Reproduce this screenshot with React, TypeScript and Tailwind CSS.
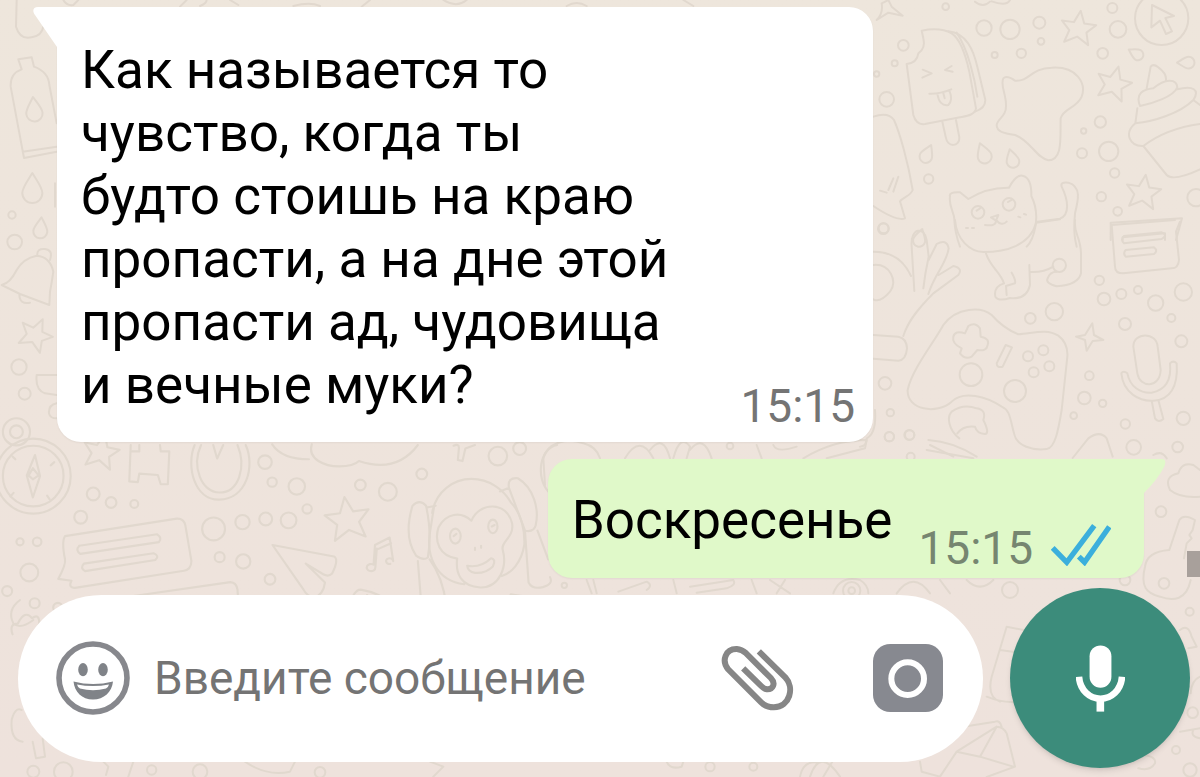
import { useState } from "react";

type Dot = [x: number, y: number, r: number];
type Mark = [x: number, y: number, size: number, angle: number];

interface TileProps {
  x: number;
  y: number;
  scale: number;
  dots?: Dot[];
  stars?: Mark[];
  drops?: Mark[];
  paths: string[];
}

const STAR = "M0 -10 L3 -3 L10 -3 L5 2 L7 9 L0 5 L-7 9 L-5 2 L-10 -3 L-3 -3 Z";
const DROP = "M0 -10 C3 -5 7 0 7 4 A7 7 0 0 1 -7 4 C-7 0 -3 -5 0 -10 Z";

const tiles: TileProps[] = [
  // ice cream, cloud, cake
  {
    x: 860, y: 0, scale: 1 / 3,
    dots: [
      [257, 20, 10], [130, 136, 16], [104, 190, 9], [80, 298, 22], [50, 222, 8], [372, 84, 23], [450, 88, 29],
      [538, 68, 18], [543, 124, 10], [404, 165, 9], [484, 160, 14], [757, 24, 15], [774, 88, 25], [728, 160, 16],
      [905, 55, 80], [721, 366, 17], [671, 393, 8], [666, 460, 15], [746, 454, 29], [764, 519, 14], [724, 590, 14],
      [773, 634, 13], [206, 537, 14], [1008, 593, 26], [70, 686, 16],
    ],
    stars: [[655, 84, 5.2, 8], [762, 250, 5.2, 15], [850, 576, 5.2, 8]],
    drops: [
      [202, 460, 2.7, 25], [370, 458, 3, -20], [456, 474, 2.7, -15], [826, 160, 2.3, -60], [976, 188, 2.5, -90], [180, 712, 2.6, 15],
    ],
    paths: [
      "M185 92 C220 85 250 86 275 100 C300 116 318 170 328 215 L348 325 C345 345 320 348 300 352 L195 372 C175 375 165 362 160 345 L140 192 C160 190 172 182 175 160 C190 150 195 135 190 115 Z",
      "M265 94 C320 100 340 150 352 200 L376 300 Q376 325 345 335",
      "M290 98 C325 150 345 240 352 290",
      "M247 365 L257 410 C262 445 300 440 298 412 L288 360",
      "M188 209 L215 220 L187 233 M275 198 L255 210 L278 215 M208 281 Q240 282 274 268 M232 280 Q238 320 265 315 Q280 300 268 272 M250 280 L254 295",
      "M430 235 Q440 225 465 242 C510 245 510 205 575 203 C650 198 680 250 665 290 C650 325 610 325 602 355 C600 410 610 480 565 481 C530 475 510 420 465 405 C430 400 410 395 410 375 C412 355 440 350 438 315 C438 280 420 255 430 235 Z",
      "M876 15 L942 48 L916 54 L936 94 L918 102 L900 62 L874 82 Z",
      "M860 265 L872 200 Q880 190 895 202 Q920 220 918 240 M840 318 C825 280 850 268 880 265 C915 235 950 235 952 262 C940 290 880 310 840 318 M952 268 C1000 255 1020 270 1000 300 C960 340 880 365 826 370 L832 325 M826 370 C790 400 810 440 850 438 C900 400 960 380 1020 372 M1000 300 L1020 315 M850 438 L920 525 Q940 545 1020 508",
      "M40 350 Q85 335 102 360 C120 400 145 490 158 570 C150 590 130 590 120 604 L135 655 Q110 665 40 618 M100 535 L85 570 M115 530 L100 575 M60 572 L80 578",
      "M270 590 Q265 575 300 577 L325 597 C360 575 400 562 447 563 Q470 520 490 528 Q515 535 514 588 C545 650 520 720 500 740 M270 590 C265 620 285 640 283 660 Q285 700 300 740",
      "M532 665 L600 656 C630 645 625 600 605 560 Q600 545 625 548 C665 560 655 600 645 640 C640 700 645 720 650 740",
      "M335 637 a19 19 0 1 0 38 0 a19 19 0 1 0 -38 0 M350 632 l12 -8 M428 613 a19 19 0 1 0 38 0 a19 19 0 1 0 -38 0 M444 606 l14 -8 M393 652 L415 645 L408 662 Z M408 660 Q410 680 375 675 M408 660 Q425 680 440 665 M318 684 h6 M336 684 h6 M475 650 l6 2 M492 642 l6 2",
      "M752 720 L752 668 L966 655 L948 720 M788 720 L788 712 L915 700 L915 720",
      "M50 60 Q70 40 65 10 L85 0 M85 0 L95 20 L128 47 L85 38 L50 60 M345 5 Q370 25 390 5 M395 4 Q440 20 450 0",
    ],
  },
  // cat body, gamepad, microphone
  {
    x: 860, y: 220, scale: 1 / 3,
    dots: [
      [71, 25, 15], [511, 295, 16], [583, 275, 26], [75, 490, 19], [91, 578, 11], [88, 650, 14], [149, 645, 14],
      [333, 464, 34], [465, 513, 33], [504, 409, 15], [550, 391, 15], [568, 439, 15], [521, 457, 15], [718, 181, 14],
      [732, 237, 19], [784, 222, 15], [834, 210, 12], [887, 249, 23], [970, 216, 26], [934, 294, 12], [795, 312, 18],
      [964, 364, 18], [688, 467, 13], [673, 534, 19], [728, 550, 11], [641, 587, 10], [796, 612, 14], [970, 595, 20],
      [821, 682, 22], [953, 681, 16], [598, 136, 20],
    ],
    paths: [
      "M285 0 C290 60 330 95 370 96 C440 96 510 75 528 10 M528 8 L600 -2 M645 0 C640 40 662 50 663 100 L663 160 Q655 195 590 199 Q555 190 563 175 Q570 155 590 155 M378 100 C390 140 420 155 432 190 Q400 200 406 230 Q415 245 450 234 Q500 240 510 195 L508 135 M455 158 Q468 180 465 190 L438 198 L440 225 M510 156 Q550 158 580 140",
      "M755 15 L945 0 M755 15 L765 140 Q765 160 790 160 L935 145 Q955 145 957 120 L948 35 L960 5 M792 48 L905 37 Q925 45 905 57 L792 70 Q780 58 792 48 M797 90 L882 82 Q895 92 882 102 L797 110 Q788 100 797 90",
      "M163 213 L155 80 C150 20 195 20 200 60 L206 110 Q195 160 190 205 M206 120 L230 72 Q260 55 266 85 C260 130 225 160 205 222 M236 165 L280 138 Q310 145 295 165 L220 220 C180 260 145 300 130 348 M40 95 Q120 95 153 168 M40 135 C90 130 115 185 90 215 Q60 250 40 238 M40 345 L115 350 Q140 355 141 385 Q138 420 115 422 L40 416",
      "M250 315 C290 260 365 260 395 285 Q430 325 475 343 C520 340 560 325 595 347 Q625 370 622 410 L605 570 C595 630 585 685 560 687 C520 692 470 680 462 640 C450 595 450 570 425 560 C380 530 310 510 275 545 C230 585 140 570 143 510 C155 450 220 370 250 315 Z",
      "M325 318 Q345 305 360 325 L362 350 Q390 355 383 375 Q380 395 352 390 L335 410 Q315 420 300 400 L305 385 Q275 370 280 350 Q285 330 315 340 Z M437 375 L456 382 L428 440 Q410 445 410 430 Z",
      "M697 310 L702 345 L730 360 L698 363 L680 392 L675 360 L648 350 L675 345 Z",
      "M820 380 C820 335 890 335 893 380 L902 450 C900 505 840 505 832 460 Z M784 460 Q790 450 802 460 C810 500 840 520 875 518 C915 510 935 480 930 430 Q940 420 950 430 C955 500 930 540 880 542 C840 545 790 520 784 460 M875 542 L885 595 Q895 610 910 597 L895 540",
      "M298 655 C265 630 260 590 275 575 Q310 550 350 565 Q380 570 370 600 Q390 640 375 642 Q350 640 345 620 Q310 615 292 640 M638 714 L685 655 Q720 630 740 655 L758 710 M880 705 Q905 690 920 715 M205 660 Q280 665 350 710 M210 675 L280 710 M0 680 Q20 680 20 655 Q50 640 45 570",
    ],
  },
  // compass, chat note, plane, monkey
  {
    x: 0, y: 420, scale: 1 / 2.8,
    dots: [
      [46, 33, 38], [46, 33, 18], [93, 157, 105], [93, 157, 85], [261, 207, 18], [311, 231, 15], [376, 235, 11],
      [226, 272, 18], [56, 341, 10], [104, 341, 12], [82, 427, 25], [20, 479, 14], [97, 513, 14], [162, 525, 13],
      [598, 305, 32], [679, 286, 20], [744, 277, 18], [808, 281, 22], [860, 249, 13], [762, 174, 13], [742, 118, 19],
      [831, 186, 23], [615, 384, 14], [681, 396, 20], [756, 446, 15], [1009, 182, 15], [1086, 201, 25], [1181, 151, 15],
      [1394, 101, 26], [1455, 80, 18], [799, 512, 12],
    ],
    stars: [[283, 88, 5, 12], [973, 277, 6.2, -8]],
    paths: [
      "M98 98 L112 157 L92 217 L75 155 Z M80 155 L92 135 L108 155 L92 166 Z M152 118 l-10 9 M38 204 l-9 10 M132 212 l7 10 M43 110 l-8 -8",
      "M366 70 L362 172 L386 174 L390 150 L442 154 L450 180 L470 180 L474 88 L450 88 L448 70 M366 88 L390 88 L390 70",
      "M545 70 C520 130 545 225 614 223 C690 222 715 130 688 70 M563 70 C535 130 565 203 614 203 C670 203 690 130 665 70 M597 70 L608 108 L625 70",
      "M182 325 L495 276 Q515 275 519 295 L536 395 Q535 420 515 422 L210 470 Q190 470 200 450 L163 445 Q185 405 182 390 Q172 340 182 325 Z M222 352 L440 320 Q455 330 445 342 L225 375 Q210 365 222 352 M235 402 L430 373 Q448 380 435 392 L238 423 Q223 415 235 402",
      "M325 520 Q325 500 345 497 L645 454 Q662 455 665 475 L668 520 M365 520 L610 500 Q625 505 622 520",
      "M763 350 L935 382 Q950 390 930 430 Q920 440 905 432 L856 402 L910 455 Q905 490 880 497 Q860 495 850 475 Z",
      "M1046 405 L1050 350 L1091 329 L1101 395 M1050 365 L1095 345 M1046 405 a12 10 0 1 0 5 8 L1055 360 M1101 395 a10 8 0 1 0 -8 8",
      "M762 68 Q790 110 865 110 M873 68 C860 110 910 130 950 130 Q990 130 1005 115 Q1110 150 1170 70 M1270 72 Q1285 65 1285 78 L1282 112 L1295 115 L1303 80 L1330 70",
      "M1210 260 C1220 200 1270 165 1320 165 C1370 165 1410 195 1430 230 C1460 260 1470 310 1468 350 C1460 400 1430 430 1405 437 M1300 460 C1220 450 1195 380 1203 320 L1215 245 M1280 388 C1230 380 1215 340 1228 300 C1250 260 1290 255 1320 282 C1340 230 1420 225 1434 290 C1440 330 1400 340 1408 365 C1420 410 1400 470 1345 469 C1290 465 1275 430 1280 388",
      "M1308 408 Q1345 415 1375 387 Q1390 390 1380 410 Q1360 430 1330 428 Q1310 425 1308 408 M1330 358 v6 M1347 352 v6 M1260 325 a15 21 0 1 0 30 0 a15 21 0 1 0 -30 0 M1270 325 l8 -6 M1367 298 a13 19 0 1 0 26 0 a13 19 0 1 0 -26 0 M1377 298 l8 -4",
      "M1193 240 Q1175 220 1155 240 C1140 290 1138 340 1165 380 Q1185 395 1198 385 Q1210 320 1193 240 M1195 245 L1220 240 M1170 395 L1180 520 M1203 390 Q1240 440 1250 520",
      "M1425 190 Q1420 160 1450 163 C1495 190 1510 250 1500 295 Q1495 315 1470 310 Z M1425 190 L1400 200 M1470 312 L1480 455 Q1490 475 1520 468 Q1550 460 1540 440 M1505 310 L1535 390",
      "M980 520 Q990 475 1010 475 Q1070 485 1100 520 M1010 495 l5 25 M1028 490 l12 30 M1050 495 l15 25 M1420 520 L1430 488 L1475 495 L1470 520",
      "M1535 200 C1500 160 1510 80 1560 70 M50 570 Q70 530 90 555 Q110 540 110 570 L95 600 M35 600 Q25 570 50 570",
    ],
  },
  // bottle and top edge
  {
    x: 0, y: 0, scale: 1 / 3,
    dots: [[36, 645, 11], [44, 726, 22], [57, 1101, 23], [74, 1181, 18]],
    drops: [[102, 326, 3.5, -5], [97, 562, 4.3, 0], [122, 682, 3, 5]],
    stars: [[107, 1003, 5, 25]],
    paths: [
      "M50 0 L48 80 Q60 120 95 112 Q125 108 130 80 M55 178 L95 172 L102 200 Q145 215 148 255 L170 370 M55 178 L65 208 Q30 220 32 260 L72 474 L170 455 M68 455 L170 440",
      "M5 855 Q30 850 50 810 Q70 775 110 767 Q150 770 160 815 Q155 850 150 875 L148 915 L60 882 Z M112 765 Q110 745 135 747 Q160 750 150 780 M58 885 Q60 915 90 908",
      "M170 1125 L110 1125 Q105 1170 135 1180 L170 1185 M170 1210 Q145 1215 147 1240 Q150 1255 170 1255 M165 550 V620",
      "M190 0 Q200 18 220 15 L235 0 M540 20 L560 0 M600 18 Q620 10 620 0 M690 0 L715 15 M880 18 Q930 5 960 18 M1085 20 L1110 0 M1330 0 Q1370 25 1400 0 M1700 18 Q1730 0 1760 18 M2050 0 L2080 18",
    ],
  },
  // key and heart on the right
  {
    x: 1120, y: 420, scale: 1 / 3,
    dots: [[123, 275, 16], [132, 490, 16], [209, 575, 12], [218, 878, 16], [168, 990, 12], [210, 1050, 20], [15, 480, 16]],
    paths: [
      "M150 210 Q130 170 175 160 Q185 125 220 135 L240 150 M150 210 Q180 235 240 230",
      "M148 390 L178 300 Q190 280 225 300 L218 330 L208 345 L215 355 L200 370 L192 415 M148 390 Q80 395 75 440 C60 500 80 520 120 530 C160 545 200 540 212 480",
      "M180 630 Q205 610 215 650 L230 680 L205 685 M212 820 Q215 780 240 770 M180 935 L240 925 M220 930 Q210 950 240 955 M70 1005 Q110 1010 105 1030 Q90 1055 55 1045",
    ],
  },
  // strip below the composer
  {
    x: 0, y: 580, scale: 1 / 3,
    dots: [[100, 575, 18], [455, 570, 14], [600, 575, 22], [190, 575, 28], [960, 577, 16], [2130, 560, 14], [2260, 560, 12]],
    paths: [
      "M68 485 Q30 480 35 420 Q45 380 65 390 M98 485 L108 535 L135 530 L128 475 M60 60 Q20 90 40 130 Q60 150 100 120",
      "M310 545 L325 560 L318 585 M400 545 L385 590 M735 545 Q800 590 870 575 L885 545 M1290 545 L1330 560 L1300 590",
      "M2000 545 Q2010 570 2045 560 L2050 545 M2400 590 Q2410 540 2455 548 M2430 590 Q2460 500 2520 590",
      "M2470 590 L2500 540 M2760 545 L2765 575 L2820 590 M2820 590 L2870 515 L2990 440 Q3010 440 3020 460 L3045 560 L2960 591 M2890 440 L2985 425 Q3000 420 3005 440 M2870 515 L2940 530 L2990 440 M2940 530 L3040 560",
      "M2960 350 Q3010 370 3050 365 M3020 140 L2975 290 Q2960 350 3000 365 M3020 140 L3120 160 M3000 210 L3070 220",
    ],
  },
  // gap around the outgoing message
  {
    x: 540, y: 430, scale: 1 / 3,
    dots: [[570, 48, 10], [1048, 20, 14], [1108, 15, 15], [1112, 80, 12], [73, 466, 8], [935, 482, 26], [935, 482, 10], [1410, 480, 24]],
    paths: [
      "M10 85 C20 40 80 20 130 40 Q170 50 180 85 M255 85 Q300 10 340 85 M330 60 Q370 10 390 85 M400 85 Q420 10 450 50 L440 85 M450 60 Q490 10 515 85 M650 45 L665 85 M700 45 Q710 70 770 50",
      "M790 85 Q880 30 980 30 L975 55 L860 85 M1160 60 L1300 85 M10 85 L15 165 M140 450 L155 490 M160 450 L170 490 M235 485 L320 455 Q340 465 320 480 M400 450 L410 490 M450 470 L580 450 Q590 465 560 475 L470 488 M635 450 L650 490",
      "M690 450 L750 490 M710 490 L735 450 M880 490 Q900 435 960 450 Q985 465 985 490 M1070 490 Q1120 420 1170 490 M1200 450 L1230 490 M1280 450 Q1320 490 1360 450",
    ],
  },
];

function Tile({ x, y, scale, dots = [], stars = [], drops = [], paths }: TileProps) {
  return (
    <g transform={`translate(${x} ${y}) scale(${scale})`}>
      {dots.map(([cx, cy, r], i) => (
        <circle key={i} cx={cx} cy={cy} r={r} />
      ))}
      {stars.map(([sx, sy, s, a], i) => (
        <path key={i} d={STAR} transform={`translate(${sx} ${sy}) rotate(${a}) scale(${s})`} strokeWidth={6 / s} />
      ))}
      {drops.map(([dx, dy, s, a], i) => (
        <path key={i} d={DROP} transform={`translate(${dx} ${dy}) rotate(${a}) scale(${s})`} strokeWidth={6 / s} />
      ))}
      {paths.map((d, i) => (
        <path key={i} d={d} />
      ))}
    </g>
  );
}

function Wallpaper() {
  return (
    <svg
      aria-hidden="true"
      className="absolute inset-0 h-full w-full"
      viewBox="0 0 1200 777"
      preserveAspectRatio="xMidYMid slice"
      fill="none"
      stroke="#e1d8ce"
      strokeWidth="6"
      strokeLinecap="round"
      strokeLinejoin="round"
    >
      {tiles.map((tile, i) => (
        <Tile key={i} {...tile} />
      ))}
    </svg>
  );
}

function SmileIcon() {
  return (
    <svg className="h-[74px] w-[74px]" viewBox="0 0 74 74">
      <circle cx="37" cy="37" r="34" fill="none" stroke="#87888d" strokeWidth="5.6" />
      <ellipse cx="27" cy="28.7" rx="4.8" ry="6.6" fill="#808388" />
      <ellipse cx="47" cy="28.7" rx="4.8" ry="6.6" fill="#808388" />
      <path d="M17.5 40.5 Q37 45.5 57 40.5 C56 51 48 58.5 37 58.5 S18.5 51 17.5 40.5 Z" fill="#808388" />
      <path d="M21 43.5 Q37 46.5 53 43.5 Q52 47 50 47.5 Q37 51 24 47.5 Q22 47 21 43.5 Z" fill="#fff" />
    </svg>
  );
}

function ClipIcon() {
  return (
    <svg className="h-[66px] w-[73px]" viewBox="125 165 218 198">
      <path
        d="M238 184 L318 263 C345 292 332 351 283 352 C266 352 254 346 245 337 L146 238 C125 212 138 176 172 177 C185 178 192 183 200 190 L274 264 C290 281 280 299 262 298 C255 297 250 293 245 288 L191 235"
        fill="none"
        stroke="#868686"
        strokeWidth="18"
      />
    </svg>
  );
}

function CameraIcon() {
  return (
    <svg className="h-[68px] w-[70px]" viewBox="0 0 210 204">
      <rect width="210" height="204" rx="52" fill="#878990" />
      <circle cx="104" cy="104" r="49" fill="none" stroke="#fff" strokeWidth="18" />
    </svg>
  );
}

function MicIcon() {
  return (
    <svg className="h-[67px] w-[49px]" viewBox="0 0 148 200">
      <rect x="41" y="0" width="66" height="128" rx="33" fill="#fff" />
      <path d="M9 95 C12 136 42 161 74 161 S136 136 139 95" fill="none" stroke="#fff" strokeWidth="20" />
      <path d="M62 160 H85 V200 H62 Z" fill="#fff" />
    </svg>
  );
}

function ReadIcon() {
  return (
    <svg className="h-[42px] w-[60px]" viewBox="573 248 179 125" role="img" aria-label="Прочитано">
      <path
        d="M578 319 L620 362 L702 253 M656 345 L673 362 L747 256"
        fill="none"
        stroke="#3bafdc"
        strokeWidth="16"
      />
    </svg>
  );
}

export default function App() {
  const [text, setText] = useState("");

  return (
    <div className="relative flex min-h-screen flex-col justify-between overflow-hidden bg-linear-to-b from-[#eee6dc] to-[#eee2dc] font-['Roboto',sans-serif]">
      <Wallpaper />

      <main className="relative flex flex-col gap-[17px] pt-[7px] pr-14 pl-[57px] text-[53px] leading-[63px] text-black">
        <article className="relative flex w-full max-w-[816px] justify-between rounded-3xl rounded-tl-none bg-white pr-[18px] pl-6 shadow-xs">
          <svg className="absolute top-0 right-full h-10 w-6" viewBox="0 0 24 40" aria-hidden="true">
            <path d="M24 0 H5 C0 0 -1 4 2 8 L24 40 Z" fill="#fff" />
          </svg>
          <p className="max-w-[590px] pt-8 pb-[25px]">
            Как называется то чувство, когда ты будто стоишь на краю пропасти, а на дне этой пропасти ад, чудовища и
            вечные муки?
          </p>
          <time className="self-end pb-3 text-[46px] leading-12 text-[#747474]">15:15</time>
        </article>

        <article className="relative flex gap-[26px] self-end rounded-3xl rounded-tr-none bg-[#e0f9c9] pr-[33px] pl-6 shadow-xs">
          <svg className="absolute top-0 left-full h-[34px] w-[22px]" viewBox="0 0 22 34" aria-hidden="true">
            <path d="M0 0 H18 C22 0 22 4 20 8 Q14 20 0 34 Z" fill="#e0f9c9" />
          </svg>
          <p className="pt-[30px] pb-[26px]">Воскресенье</p>
          <div className="flex items-start gap-[18px] self-end pb-[6px] text-[46px] leading-12 text-[#768670]">
            <time>15:15</time>
            <ReadIcon />
          </div>
        </article>
      </main>

      <div className="absolute top-[551px] right-0 h-[26px] w-[13px] bg-[#a8a09b]" />

      <form
        className="relative flex items-center gap-[27px] pt-[10px] pr-[10px] pb-[9px] pl-[18px]"
        onSubmit={(e) => e.preventDefault()}
      >
        <div className="flex h-[167px] min-w-0 flex-1 items-center rounded-full bg-white pr-10 pl-[38px]">
          <button type="button" aria-label="Эмодзи" className="shrink-0">
            <SmileIcon />
          </button>
          <input
            aria-label="Введите сообщение"
            placeholder="Введите сообщение"
            className="mx-6 min-w-0 flex-1 bg-transparent text-[46px] leading-14 text-black outline-none placeholder:text-[#747474]"
            value={text}
            onChange={(e) => setText(e.target.value)}
          />
          <div className="flex shrink-0 items-center gap-[79px]">
            <button type="button" aria-label="Прикрепить">
              <ClipIcon />
            </button>
            <button type="button" aria-label="Камера">
              <CameraIcon />
            </button>
          </div>
        </div>
        <button
          type="button"
          aria-label="Голосовое сообщение"
          className="flex h-[180px] w-[180px] shrink-0 items-center justify-center rounded-full bg-[#3c8c7b] shadow-md"
        >
          <MicIcon />
        </button>
      </form>
    </div>
  );
}
